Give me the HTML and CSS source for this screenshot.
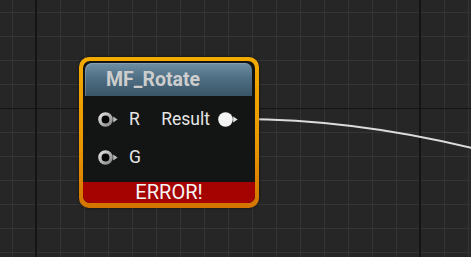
FILE: index.html
```html
<!DOCTYPE html>
<html>
<head>
  <title>MF_Rotate Node</title>
  <link rel="stylesheet" href="styles.css">
</head>
<body>
  <div class="graph">
    <svg class="wire" width="471" height="257" viewBox="0 0 471 257">
      <path d="M239 119 C300 119, 380 125, 480 150" fill="none" stroke="#dcdcdc" stroke-width="2"/>
    </svg>

    <div class="node">
      <div class="node-inner">
        <div class="node-header">MF_Rotate</div>
        <div class="node-pins">
          <div class="pin-row">
            <svg class="pin" width="22" height="15" viewBox="0 0 22 15">
              <defs>
                <linearGradient id="ring" x1="0" y1="0" x2="1" y2="1">
                  <stop offset="0" stop-color="#e0e0e0"/>
                  <stop offset="1" stop-color="#8a8a8a"/>
                </linearGradient>
              </defs>
              <circle cx="7.5" cy="7.5" r="5.6" fill="#050505" stroke="url(#ring)" stroke-width="3.4"/>
              <polygon points="15.2,4.6 19.6,7.5 15.2,10.4" fill="#b8b8b8"/>
            </svg>
            <span class="pin-label">R</span>
            <span class="pin-out">
              <span class="pin-label">Result</span>
              <svg class="pin" width="22" height="15" viewBox="0 0 22 15">
                <circle cx="7.5" cy="7.5" r="7.3" fill="#f4f4f4"/>
                <polygon points="15.2,4.6 19.6,7.5 15.2,10.4" fill="#e4e4e4"/>
              </svg>
            </span>
          </div>
          <div class="pin-row">
            <svg class="pin" width="22" height="15" viewBox="0 0 22 15">
              <circle cx="7.5" cy="7.5" r="5.6" fill="#050505" stroke="url(#ring)" stroke-width="3.4"/>
              <polygon points="15.2,4.6 19.6,7.5 15.2,10.4" fill="#b8b8b8"/>
            </svg>
            <span class="pin-label">G</span>
          </div>
        </div>
        <div class="node-error">ERROR!</div>
      </div>
    </div>
  </div>
</body>
</html>
```

FILE: styles.css
```css
html, body {
  margin: 0;
  padding: 0;
}

body {
  font-family: Roboto, "Liberation Sans", sans-serif;
  background: #262626;
}

.graph {
  position: relative;
  width: 471px;
  height: 257px;
  overflow: hidden;
  background-color: #262626;
  background-image:
    linear-gradient(to right, #141414 2px, transparent 2px),
    linear-gradient(to bottom, #141414 1px, transparent 1px),
    linear-gradient(to right, #343434 1px, transparent 1px),
    linear-gradient(to bottom, #343434 1px, transparent 1px);
  background-size: 384px 384px, 384px 384px, 24px 24px, 24px 24px;
  background-position: 35px 0, 0 108px, 12px 0, 0 12px;
}

.wire {
  position: absolute;
  left: 0;
  top: 0;
}

.node {
  position: absolute;
  left: 79px;
  top: 57px;
  width: 180px;
  height: 151px;
  box-sizing: border-box;
  padding: 4px 4px 5px 4px;
  border-radius: 10px;
  background: linear-gradient(to bottom, #f4ab00, #e89500 60%, #d37400);
  box-shadow: 0 0 3px rgba(0, 0, 0, 0.6);
}

.node-inner {
  height: 100%;
  display: flex;
  flex-direction: column;
  border-radius: 7px;
  overflow: hidden;
  background: #131514;
}

.node-header {
  height: 33px;
  margin: 2px 3px 0 2px;
  padding-left: 21px;
  box-sizing: border-box;
  border-radius: 7px 7px 0 0;
  background: linear-gradient(to bottom, #6e8fa4, #4f6f84 45%, #3a5567);
  box-shadow: inset 1px 1px 0 rgba(200, 220, 230, 0.25);
  color: #cdcdcd;
  font-weight: bold;
  font-size: 19.5px;
  line-height: 34px;
}

.node-pins {
  flex: 1;
  padding-top: 4px;
}

.pin-row {
  height: 38px;
  display: flex;
  align-items: center;
  padding: 0 15px;
}

.pin {
  display: block;
  flex: none;
}

.pin-label {
  color: #e6e6e6;
  font-size: 17.5px;
  margin-left: 9px;
}

.pin-out {
  margin-left: auto;
  display: flex;
  align-items: center;
}

.pin-out .pin-label {
  margin-left: 0;
  margin-right: 8px;
}

.node-error {
  flex: none;
  height: 21px;
  background: #a50202;
  color: #f4f4f4;
  font-size: 20px;
  line-height: 21px;
  text-align: center;
  border-radius: 0 0 6px 6px;
}
```
